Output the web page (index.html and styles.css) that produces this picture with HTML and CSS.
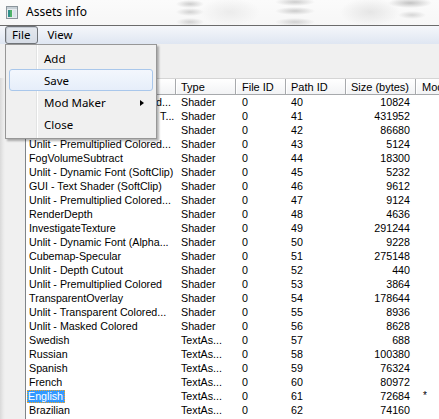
FILE: index.html
```html
<!DOCTYPE html>
<html>
<head>
<meta charset="utf-8">
<link rel="stylesheet" href="styles.css">
</head>
<body>
<div class="window">
  <div class="titlebar">
    <svg class="appicon" width="12" height="13" viewBox="0 0 12 13">
      <rect x="0.5" y="0.5" width="11" height="12" fill="#e8ecef" stroke="#8b959c"/>
      <rect x="1" y="1" width="10" height="2" fill="#c7d0d6"/>
      <rect x="2" y="4" width="2" height="7" fill="#2f8f8a"/>
      <rect x="4" y="4" width="2" height="7" fill="#4fb36a"/>
      <rect x="7" y="4" width="3" height="7" fill="#d9e3ea"/>
    </svg>
    <span class="title">Assets info</span>
  </div>
  <div class="menubar">
    <span class="menuitem active">File</span>
    <span class="menuitem">View</span>
  </div>
  <div class="toolbar"></div>
  <div class="content">
    <div class="gutter"></div>
    <div class="list">
      <div class="row header">
        <div class="c name">Name</div>
        <div class="c">Type</div>
        <div class="c">File ID</div>
        <div class="c">Path ID</div>
        <div class="c num">Size (bytes)</div>
        <div class="c">Modified</div>
      </div>
      <div class="row"><div class="c name">Unlit - Premultiplied Colored...</div><div class="c">Shader</div><div class="c">0</div><div class="c">40</div><div class="c num">10824</div><div class="c"></div></div>
      <div class="row"><div class="c name">Unlit - Transparent Colored T...</div><div class="c">Shader</div><div class="c">0</div><div class="c">41</div><div class="c num">431952</div><div class="c"></div></div>
      <div class="row"><div class="c name">Unlit - Text</div><div class="c">Shader</div><div class="c">0</div><div class="c">42</div><div class="c num">86680</div><div class="c"></div></div>
      <div class="row"><div class="c name">Unlit - Premultiplied Colored...</div><div class="c">Shader</div><div class="c">0</div><div class="c">43</div><div class="c num">5124</div><div class="c"></div></div>
      <div class="row"><div class="c name">FogVolumeSubtract</div><div class="c">Shader</div><div class="c">0</div><div class="c">44</div><div class="c num">18300</div><div class="c"></div></div>
      <div class="row"><div class="c name">Unlit - Dynamic Font (SoftClip)</div><div class="c">Shader</div><div class="c">0</div><div class="c">45</div><div class="c num">5232</div><div class="c"></div></div>
      <div class="row"><div class="c name">GUI - Text Shader (SoftClip)</div><div class="c">Shader</div><div class="c">0</div><div class="c">46</div><div class="c num">9612</div><div class="c"></div></div>
      <div class="row"><div class="c name">Unlit - Premultiplied Colored...</div><div class="c">Shader</div><div class="c">0</div><div class="c">47</div><div class="c num">9124</div><div class="c"></div></div>
      <div class="row"><div class="c name">RenderDepth</div><div class="c">Shader</div><div class="c">0</div><div class="c">48</div><div class="c num">4636</div><div class="c"></div></div>
      <div class="row"><div class="c name">InvestigateTexture</div><div class="c">Shader</div><div class="c">0</div><div class="c">49</div><div class="c num">291244</div><div class="c"></div></div>
      <div class="row"><div class="c name">Unlit - Dynamic Font (Alpha...</div><div class="c">Shader</div><div class="c">0</div><div class="c">50</div><div class="c num">9228</div><div class="c"></div></div>
      <div class="row"><div class="c name">Cubemap-Specular</div><div class="c">Shader</div><div class="c">0</div><div class="c">51</div><div class="c num">275148</div><div class="c"></div></div>
      <div class="row"><div class="c name">Unlit - Depth Cutout</div><div class="c">Shader</div><div class="c">0</div><div class="c">52</div><div class="c num">440</div><div class="c"></div></div>
      <div class="row"><div class="c name">Unlit - Premultiplied Colored</div><div class="c">Shader</div><div class="c">0</div><div class="c">53</div><div class="c num">3864</div><div class="c"></div></div>
      <div class="row"><div class="c name">TransparentOverlay</div><div class="c">Shader</div><div class="c">0</div><div class="c">54</div><div class="c num">178644</div><div class="c"></div></div>
      <div class="row"><div class="c name">Unlit - Transparent Colored...</div><div class="c">Shader</div><div class="c">0</div><div class="c">55</div><div class="c num">8936</div><div class="c"></div></div>
      <div class="row"><div class="c name">Unlit - Masked Colored</div><div class="c">Shader</div><div class="c">0</div><div class="c">56</div><div class="c num">8628</div><div class="c"></div></div>
      <div class="row"><div class="c name">Swedish</div><div class="c">TextAs...</div><div class="c">0</div><div class="c">57</div><div class="c num">688</div><div class="c"></div></div>
      <div class="row"><div class="c name">Russian</div><div class="c">TextAs...</div><div class="c">0</div><div class="c">58</div><div class="c num">100380</div><div class="c"></div></div>
      <div class="row"><div class="c name">Spanish</div><div class="c">TextAs...</div><div class="c">0</div><div class="c">59</div><div class="c num">76324</div><div class="c"></div></div>
      <div class="row"><div class="c name">French</div><div class="c">TextAs...</div><div class="c">0</div><div class="c">60</div><div class="c num">80972</div><div class="c"></div></div>
      <div class="row"><div class="c name"><span class="sel">English</span></div><div class="c">TextAs...</div><div class="c">0</div><div class="c">61</div><div class="c num">72684</div><div class="c mod">*</div></div>
      <div class="row"><div class="c name">Brazilian</div><div class="c">TextAs...</div><div class="c">0</div><div class="c">62</div><div class="c num">74160</div><div class="c"></div></div>
    </div>
  </div>

  <div class="dropdown">
    <div class="ditem">Add</div>
    <div class="ditem hover">Save</div>
    <div class="ditem">Mod Maker<span class="arrow"></span></div>
    <div class="ditem">Close</div>
  </div>
</div>
</body>
</html>
```

FILE: styles.css
```css
html, body {
  margin: 0;
  padding: 0;
}
body {
  width: 439px;
  height: 419px;
  overflow: hidden;
  background: #f0f0f0;
}
.window {
  position: relative;
  width: 439px;
  height: 419px;
  overflow: hidden;
  font-family: "Liberation Sans", Arial, sans-serif;
  color: #000;
}
.titlebar {
  height: 25px;
  border-bottom: 1px solid #6b6b6b;
  display: flex;
  align-items: center;
  padding-left: 6px;
  box-sizing: content-box;
  background:
    radial-gradient(ellipse 14px 4px at 190px 4px, rgba(150,150,150,0.45), rgba(150,150,150,0) 100%),
    radial-gradient(ellipse 14px 4px at 190px 12px, rgba(150,150,150,0.40), rgba(150,150,150,0) 100%),
    radial-gradient(ellipse 14px 4px at 190px 22px, rgba(150,150,150,0.40), rgba(150,150,150,0) 100%),
    radial-gradient(ellipse 20px 4px at 295px 2px, rgba(150,150,150,0.45), rgba(150,150,150,0) 100%),
    radial-gradient(ellipse 20px 4px at 295px 11px, rgba(150,150,150,0.45), rgba(150,150,150,0) 100%),
    radial-gradient(ellipse 20px 4px at 295px 22px, rgba(150,150,150,0.40), rgba(150,150,150,0) 100%),
    radial-gradient(ellipse 22px 5px at 410px 3px, rgba(140,140,140,0.5), rgba(140,140,140,0) 100%),
    radial-gradient(ellipse 14px 4px at 412px 15px, rgba(150,150,150,0.35), rgba(150,150,150,0) 100%),
    radial-gradient(ellipse 30px 14px at 370px 12px, rgba(200,200,200,0.4), rgba(200,200,200,0) 100%),
    radial-gradient(ellipse 30px 14px at 230px 12px, rgba(215,215,215,0.4), rgba(215,215,215,0) 100%),
    linear-gradient(#fbfbfb, #f7f7f7);
}
.appicon {
  display: block;
  margin-top: -1px;
}
.title {
  font-family: "Noto Sans", "Liberation Sans", sans-serif;
  font-size: 12px;
  margin-left: 8px;
  margin-top: -2px;
}
.menubar {
  height: 18px;
  display: flex;
  align-items: center;
  padding-left: 5px;
  background: linear-gradient(#f5f7fb, #dfe6f2);
  font-family: "Noto Sans", "Liberation Sans", sans-serif;
  font-size: 11.5px;
}
.menuitem {
  height: 16px;
  line-height: 15px;
  padding: 0 7px 0 6px;
  border: 1px solid transparent;
  border-radius: 3px;
  margin-right: 2px;
}
.menuitem.active {
  border-color: #6f7378;
  background: linear-gradient(#e4e8ee, #d6dce6);
  box-shadow: inset 1px 1px 0 #c3c9d2;
}
.toolbar {
  height: 34px;
  background: #f0f0f0;
}
.content {
  display: flex;
  height: 341px;
}
.gutter {
  width: 25px;
  background: linear-gradient(90deg, #d9d9d9 0, #e9e9e9 3px, #f0f0f0 5px, #f0f0f0 100%);
}
.list {
  flex: 1;
  background: #fff;
  border-left: 1px solid #7f8489;
  font-size: 10.7px;
  overflow: hidden;
}
.row {
  display: grid;
  grid-template-columns: 150px 60px 50px 60px 70px 80px;
  height: 14px;
  line-height: 14px;
  white-space: nowrap;
}
.c {
  overflow: hidden;
  padding-left: 6px;
}
.c.name {
  padding-left: 3px;
}
.row .c:nth-child(2) {
  padding-left: 5px;
}
.row .c:nth-child(4) {
  padding-left: 5px;
}
.c.num {
  text-align: right;
  padding-left: 0;
  padding-right: 6px;
}
.c.mod {
  padding-left: 7px;
  font-size: 10px;
}
.row.header {
  height: 17px;
  line-height: 17px;
  font-size: 11px;
  background: linear-gradient(#ffffff, #f1f2f4);
  border-top: 1px solid #d5d5d5;
  box-sizing: border-box;
}
.header .c {
  border-right: 1px solid #a7a9ac;
  border-bottom: 1px solid #a7a9ac;
  box-shadow: inset 1px 0 0 #ffffff;
  line-height: 16px;
}
.sel {
  display: inline-block;
  margin-left: -2px;
  padding: 0 2px 0 1px;
  background: #3399ff;
  color: #fff;
  outline: 1px dotted #f5a623;
  outline-offset: -1px;
  line-height: 13px;
}
.dropdown {
  position: absolute;
  left: 5px;
  top: 44px;
  width: 150px;
  height: 91px;
  padding-top: 2px;
  border: 1px solid #979797;
  background:
    linear-gradient(90deg, transparent 30px, #e2e3e3 30px, #e2e3e3 31px, #ffffff 31px, #ffffff 32px, transparent 32px),
    #f0f0f0;
  box-shadow: 2px 2px 2px rgba(0,0,0,0.3);
  font-family: "Noto Sans", "Liberation Sans", sans-serif;
  font-size: 11.5px;
}
.ditem {
  position: relative;
  height: 22px;
  line-height: 22px;
  padding-left: 34px;
  margin: 0 3px;
  border: 1px solid transparent;
  box-sizing: border-box;
  border-radius: 3px;
}
.ditem.hover {
  border-color: #a9c7eb;
  background: linear-gradient(#f3f7fd, #e6eefa);
}
.arrow {
  position: absolute;
  right: 8px;
  top: 8px;
  width: 0;
  height: 0;
  border-top: 3.5px solid transparent;
  border-bottom: 3.5px solid transparent;
  border-left: 4px solid #000;
}
```
